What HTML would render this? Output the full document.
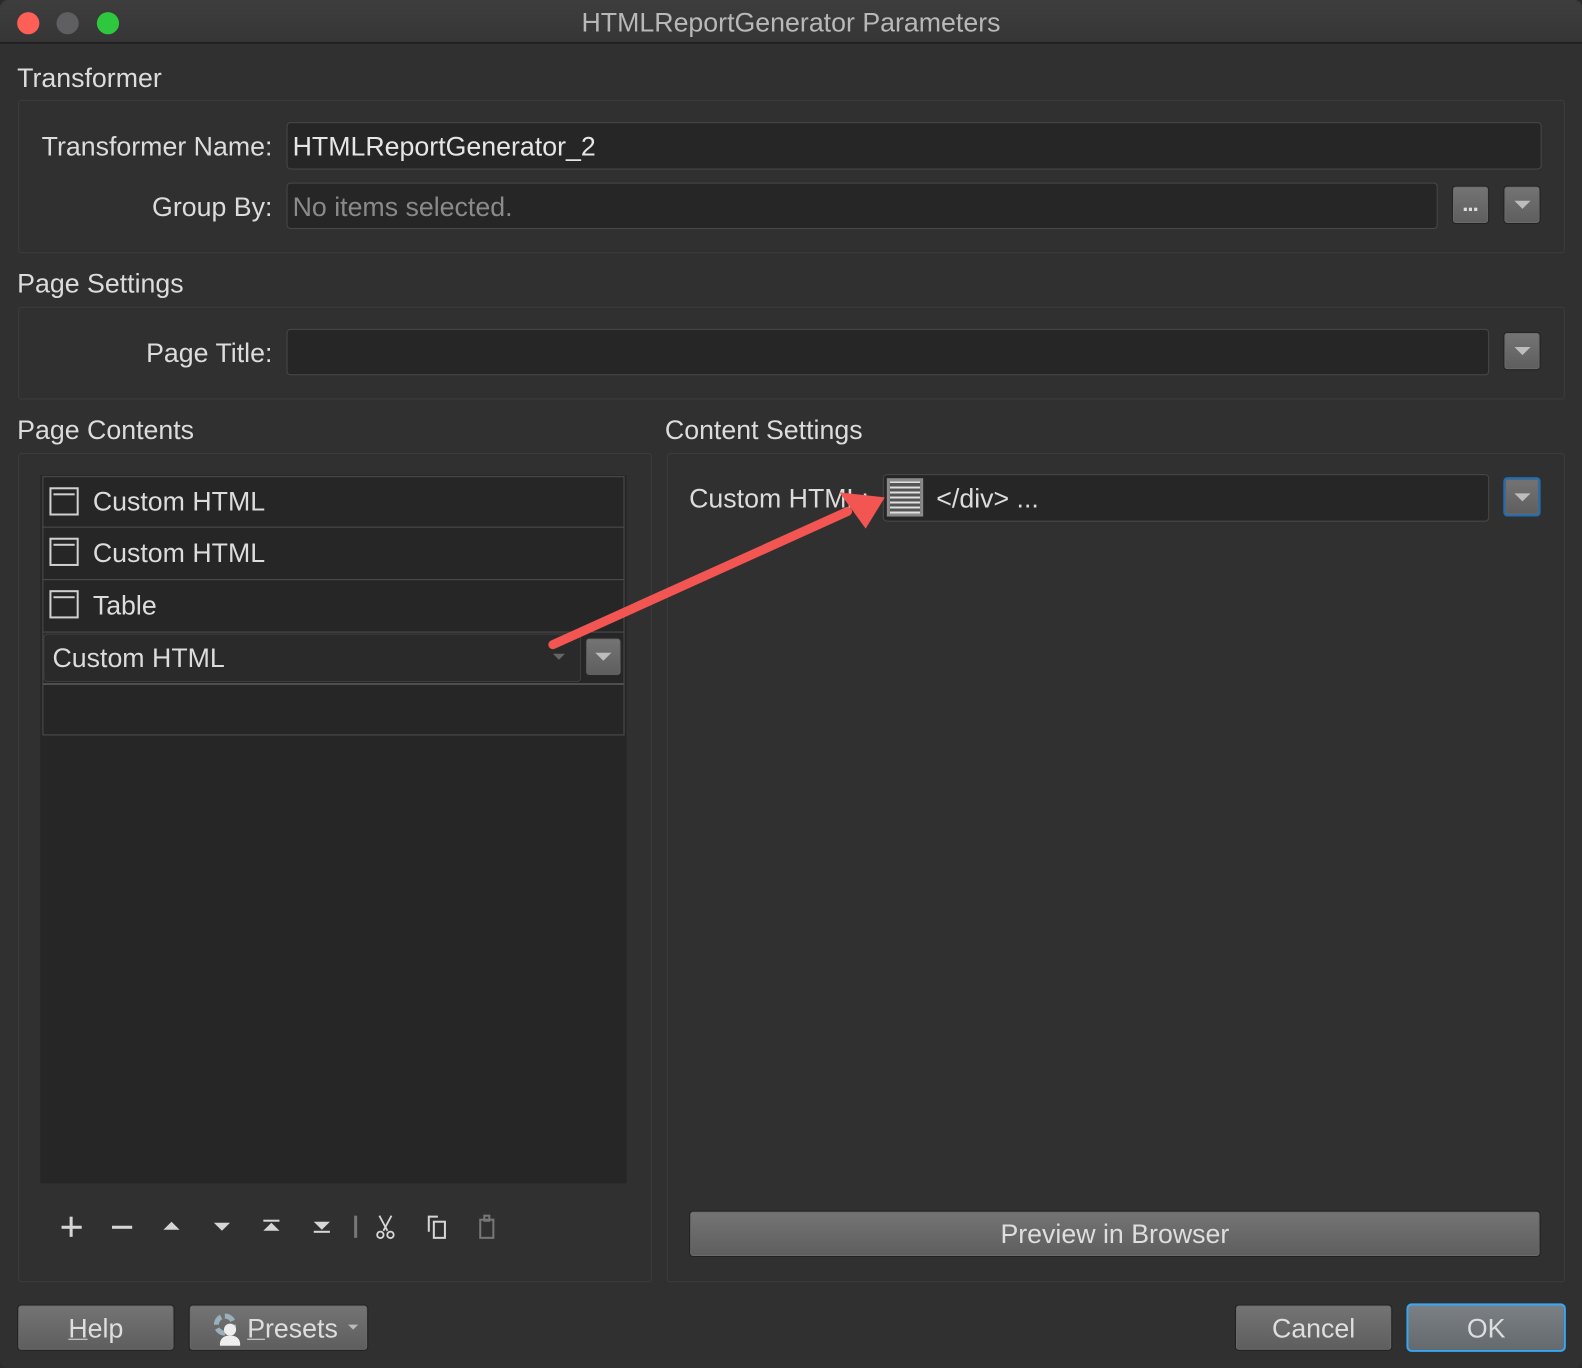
<!DOCTYPE html>
<html><head><meta charset="utf-8"><style>
*{box-sizing:border-box;margin:0;padding:0}
html,body{width:1582px;height:1368px;overflow:hidden;background:#2b2b2b}
#w{position:absolute;left:0;top:0;width:1568px;height:1356px;transform:scale(1.00893,1.00885);transform-origin:0 0;background:#303030;font-family:"Liberation Sans",sans-serif;color:#dcdcdc;border-radius:8px;overflow:hidden}
.a{position:absolute}
.t{position:absolute;font-size:26.5px;line-height:30px;white-space:nowrap}
.box{position:absolute;border:1.5px solid #3c3c3c;border-radius:3px;background:#303030}
.inp{position:absolute;background:#262626;border:1.5px solid #484848;border-radius:4px}
.btn{position:absolute;border:1.5px solid #222;border-radius:4px;background:linear-gradient(#747474,#5e5e5e);box-shadow:inset 0 0 0 1px #6a6a6a}
.dd::after{content:"";position:absolute;left:50%;top:50%;margin:-4px 0 0 -8px;border-left:8px solid transparent;border-right:8px solid transparent;border-top:8px solid #bdbdbd}
.row{position:absolute;left:42px;width:577px;height:52px;border-top:1.5px solid #4e4e4e;border-left:1.5px solid #4e4e4e;border-right:1.5px solid #4e4e4e}
.ic{position:absolute;left:6px;top:10px;width:29px;height:28px;border:2px solid #d0d0d0}
.ic::before{content:"";position:absolute;left:2px;right:2px;top:4px;height:2px;background:#d0d0d0}
.bt{position:absolute;text-align:center;font-size:26.5px;line-height:42px;color:#dedede}
</style></head><body><div id="w">
<div class="a" style="left:0;top:0;width:1568px;height:43px;background:linear-gradient(#3d3d3d,#363636);border-bottom:1.5px solid #111"></div>
<div class="a" style="left:17px;top:12px;width:22px;height:22px;border-radius:50%;background:#fe5f57"></div>
<div class="a" style="left:56px;top:12px;width:22px;height:22px;border-radius:50%;background:#5f5f61"></div>
<div class="a" style="left:96px;top:12px;width:22px;height:22px;border-radius:50%;background:#2ec83f"></div>
<div class="t" style="left:0;width:1568px;text-align:center;top:7px;color:#b8b8b8">HTMLReportGenerator Parameters</div>

<div class="t" style="left:17px;top:62px">Transformer</div>
<div class="box" style="left:18px;top:99px;width:1533px;height:152px"></div>
<div class="t" style="left:0;width:270px;text-align:right;top:130px">Transformer Name:</div>
<div class="inp" style="left:284px;top:121px;width:1244px;height:47px"></div>
<div class="t" style="left:290px;top:130px;color:#e6e6e6">HTMLReportGenerator_2</div>
<div class="t" style="left:0;width:270px;text-align:right;top:190px">Group By:</div>
<div class="inp" style="left:284px;top:181px;width:1141px;height:46px"></div>
<div class="t" style="left:290px;top:190px;color:#8a8a8a">No items selected.</div>
<div class="btn" style="left:1439px;top:184px;width:37px;height:38px"><div class="a" style="left:0;width:34px;top:4px;text-align:center;font-size:22px;font-weight:bold;color:#ddd;letter-spacing:-1px">...</div></div>
<div class="btn dd" style="left:1490px;top:184px;width:37px;height:38px"></div>

<div class="t" style="left:17px;top:266px">Page Settings</div>
<div class="box" style="left:18px;top:304px;width:1533px;height:92px"></div>
<div class="t" style="left:0;width:270px;text-align:right;top:335px">Page Title:</div>
<div class="inp" style="left:284px;top:326px;width:1192px;height:46px"></div>
<div class="btn dd" style="left:1490px;top:329px;width:37px;height:38px"></div>

<div class="t" style="left:17px;top:411px">Page Contents</div>
<div class="t" style="left:659px;top:411px">Content Settings</div>
<div class="box" style="left:18px;top:449px;width:628px;height:822px"></div>
<div class="box" style="left:661px;top:449px;width:890px;height:822px"></div>

<div class="a" style="left:40px;top:471px;width:581px;height:702px;background:#262626"></div>
<div class="row" style="top:472px"><div class="ic"></div><div class="t" style="left:49px;top:9px">Custom HTML</div></div>
<div class="row" style="top:522px"><div class="ic"></div><div class="t" style="left:49px;top:10px">Custom HTML</div></div>
<div class="row" style="top:574px"><div class="ic"></div><div class="t" style="left:49px;top:10px">Table</div></div>
<div class="row" style="top:626px;height:103px;border-bottom:1.5px solid #4e4e4e"></div>
<div class="a" style="left:42px;top:677px;width:577px;height:1.5px;background:#4e4e4e"></div>
<div class="a" style="left:43px;top:628px;width:533px;height:48px;background:#2a2a2a;border:1.5px solid #3e3e3e;border-radius:4px"></div>
<div class="t" style="left:52px;top:637px">Custom HTML</div>
<div class="a" style="left:548px;top:648px;border-left:6px solid transparent;border-right:6px solid transparent;border-top:6px solid #666"></div>
<div class="btn dd" style="left:580px;top:632px;width:36px;height:38px;border-color:#2a2a2a"></div>

<div class="a" style="left:61px;top:1215px;width:20px;height:3px;background:#d6d6d6"></div>
<div class="a" style="left:69px;top:1206px;width:3px;height:20px;background:#d6d6d6"></div>
<div class="a" style="left:111px;top:1215px;width:20px;height:3px;background:#d6d6d6"></div>
<div class="a" style="left:162px;top:1211px;border-left:8px solid transparent;border-right:8px solid transparent;border-bottom:8px solid #d6d6d6"></div>
<div class="a" style="left:212px;top:1212px;border-left:8px solid transparent;border-right:8px solid transparent;border-top:8px solid #d6d6d6"></div>
<div class="a" style="left:261px;top:1209px;width:16px;height:2px;background:#d6d6d6"></div>
<div class="a" style="left:261px;top:1212px;border-left:8px solid transparent;border-right:8px solid transparent;border-bottom:8px solid #d6d6d6"></div>
<div class="a" style="left:311px;top:1211px;border-left:8px solid transparent;border-right:8px solid transparent;border-top:8px solid #d6d6d6"></div>
<div class="a" style="left:311px;top:1220px;width:16px;height:2px;background:#d6d6d6"></div>
<div class="a" style="left:351px;top:1205px;width:3px;height:22px;background:#777"></div>
<svg class="a" style="left:370px;top:1203px" width="24" height="26" viewBox="0 0 24 26" fill="none" stroke="#d6d6d6" stroke-width="1.8"><path d="M6 2l8 15M18 2l-8 15"/><circle cx="7" cy="21" r="3.2"/><circle cx="17" cy="21" r="3.2"/></svg>
<svg class="a" style="left:422px;top:1204px" width="24" height="26" viewBox="0 0 24 26" fill="none" stroke="#d6d6d6" stroke-width="2"><path d="M3 17V2h9"/><rect x="8" y="7" width="11" height="16"/></svg>
<svg class="a" style="left:472px;top:1203px" width="22" height="26" viewBox="0 0 22 26" fill="none" stroke="#777" stroke-width="2"><rect x="4" y="6" width="13" height="18"/><rect x="8" y="2" width="5" height="5"/></svg>

<div class="t" style="left:683px;top:479px">Custom HTML:</div>
<div class="inp" style="left:875px;top:470px;width:601px;height:47px"></div>
<div class="a" style="left:879px;top:474px;width:36px;height:38px;border:3px solid #8a8a8a;background:repeating-linear-gradient(#e0e0e0 0 2px,#555 2px 5px)"></div>
<div class="t" style="left:928px;top:479px">&lt;/div&gt; ...</div>
<div class="btn dd" style="left:1490px;top:473px;width:37px;height:39px;border:2px solid #1a6fb8"></div>

<svg class="a" style="left:0;top:0" width="1568" height="1356"><path d="M548 639L840 507" stroke="#f25552" stroke-width="9" stroke-linecap="round"/><path d="M877 493L832 488L858 524Z" fill="#f25552"/></svg>

<div class="btn" style="left:683px;top:1200px;width:844px;height:46px"><div class="bt" style="left:0;right:0;top:1px">Preview in Browser</div></div>

<div class="btn" style="left:17px;top:1293px;width:156px;height:46px"><div class="bt" style="left:0;right:0;top:2px"><u style="text-decoration-thickness:1px">H</u>elp</div></div>
<div class="btn" style="left:187px;top:1293px;width:178px;height:46px">
<div class="a" style="left:24px;top:8px;width:22px;height:22px;border-radius:50%;border:5px dashed #9bb0bd"></div>
<div class="a" style="left:34px;top:18px;width:12px;height:12px;border-radius:50%;background:#eee"></div>
<div class="a" style="left:30px;top:30px;width:20px;height:10px;border-radius:8px 8px 0 0;background:#eee"></div>
<div class="bt" style="left:57px;top:2px"><u style="text-decoration-thickness:1px">P</u>resets</div>
<div class="a" style="left:157px;top:19px;border-left:5px solid transparent;border-right:5px solid transparent;border-top:5px solid #bbb"></div></div>
<div class="btn" style="left:1224px;top:1293px;width:156px;height:46px"><div class="bt" style="left:0;right:0;top:2px">Cancel</div></div>
<div class="a" style="left:1394px;top:1292px;width:158px;height:48px;border:2px solid #3aa7f2;border-radius:5px;background:linear-gradient(#7a8084,#646a6e)"><div class="bt" style="left:0;right:0;top:2px">OK</div></div>
</div></body></html>
